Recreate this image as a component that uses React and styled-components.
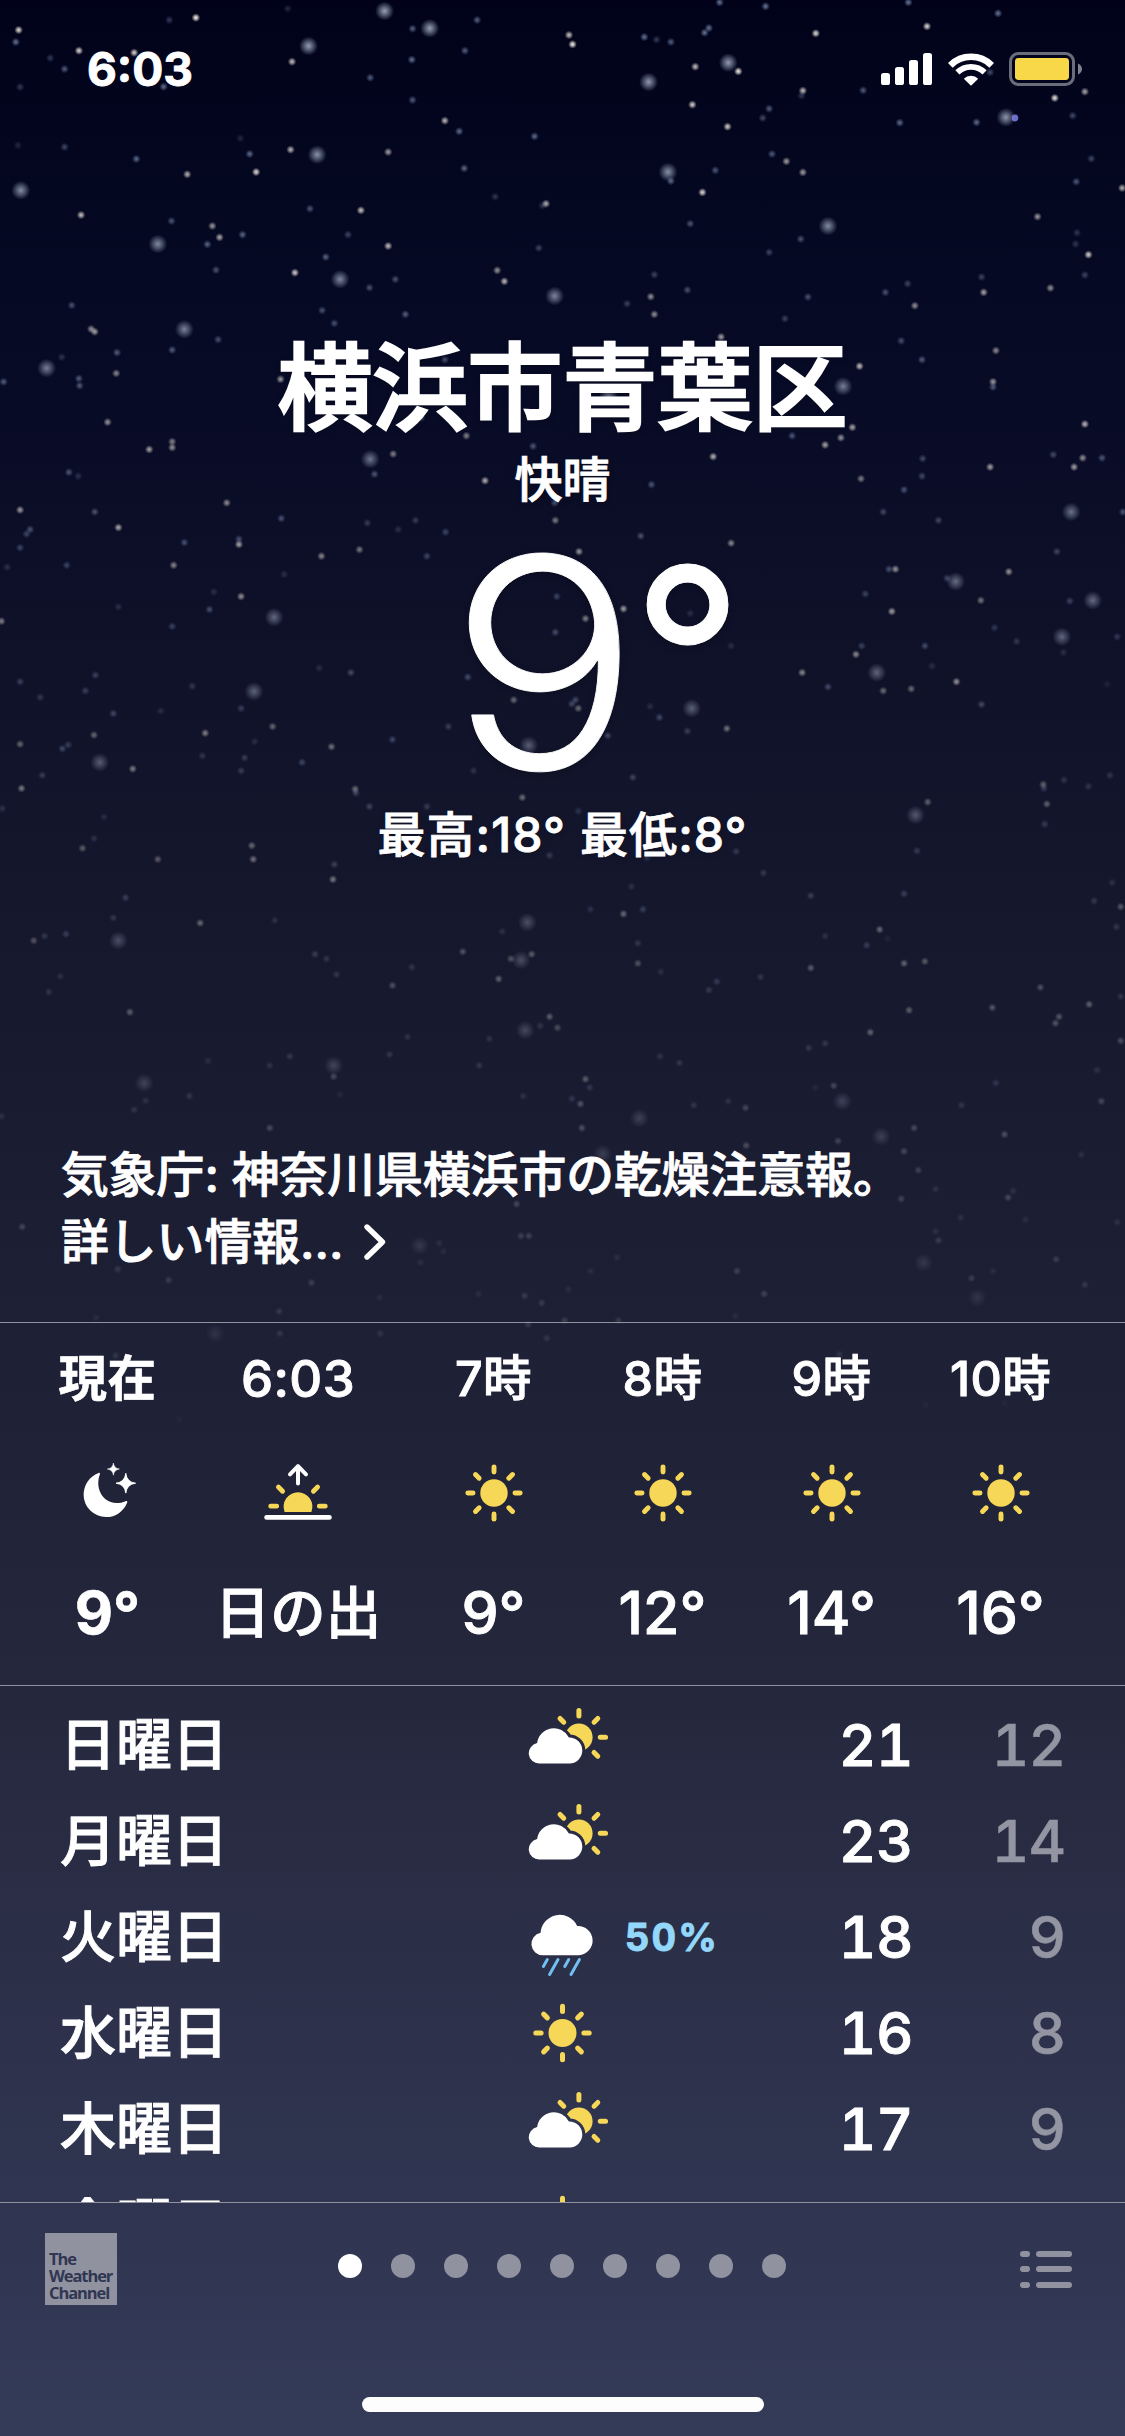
import styled, { createGlobalStyle, css } from "styled-components";

const GlobalStyle = createGlobalStyle`
  * {
    box-sizing: border-box;
  }
  body {
    margin: 0;
    background: #05071b;
  }
`;

// star positions are kept per band: x is out of 1568, y is scaled by the band
const topStars = {
  stepY: 1 / 3,
  startY: 0,
  big: [
    [536, 33], [599, 85], [430, 138], [1015, 188], [904, 246], [442, 464], [29, 571],
    [931, 516], [1402, 352], [1154, 678], [220, 732], [474, 838], [773, 888], [257, 988],
  ],
  small: [
    [273, 53, 1], [26, 90, 0.9], [22, 126, 0.6], [110, 152, 0.9], [187, 158, 0.9], [70, 174, 0.3],
    [90, 207, 0.5], [28, 261, 0.3], [236, 60, 0.3], [401, 26, 0.2], [575, 86, 0.5], [665, 60, 0.5],
    [648, 152, 0.5], [574, 179, 0.6], [407, 185, 0.8], [516, 233, 0.5], [228, 260, 0.6], [575, 300, 0.5],
    [620, 362, 0.8], [640, 394, 0.6], [745, 409, 0.6], [793, 105, 0.8], [798, 133, 1], [898, 111, 0.6],
    [935, 126, 0.5], [915, 119, 0.3], [982, 98, 0.6], [988, 84, 0.6], [1003, 7, 0.6], [1067, 19, 0.6],
    [1137, 100, 0.9], [1266, 7, 0.6], [1292, 79, 0.9], [1391, 40, 0.6], [969, 200, 0.8], [1029, 214, 1],
    [1119, 272, 0.8], [1117, 287, 0.3], [1203, 271, 0.5], [965, 314, 0.9], [1072, 326, 0.5], [1063, 354, 0.4],
    [1014, 380, 0.9], [1380, 217, 0.4], [1512, 275, 0.7], [1470, 294, 1], [1495, 347, 0.4], [1254, 368, 0.6],
    [1361, 367, 0.6], [335, 415, 0.2], [25, 436, 0.2], [90, 441, 0.4], [190, 477, 0.6], [348, 462, 0.6],
    [405, 449, 0.8], [541, 456, 0.7], [647, 505, 0.6], [261, 523, 0.8], [357, 516, 1], [1076, 462, 0.5],
    [1096, 484, 0.7], [997, 511, 0.5], [935, 543, 0.6], [1119, 517, 0.7], [979, 577, 1], [1521, 476, 0.4],
    [1500, 545, 0.5], [1564, 564, 0.8], [690, 590, 0.3], [761, 611, 0.8], [756, 617, 0.3], [113, 645, 0.9],
    [432, 626, 0.5], [503, 631, 0.9], [239, 663, 0.5], [296, 678, 0.7], [338, 704, 0.6], [306, 712, 0.8],
    [289, 733, 0.6], [485, 704, 0.4], [541, 738, 0.9], [454, 771, 0.6], [751, 744, 0.4], [301, 810, 0.5],
    [411, 818, 1], [962, 671, 0.5], [1116, 717, 0.5], [1072, 757, 0.4], [1446, 650, 0.7], [1501, 698, 0.3],
    [1499, 732, 0.3], [1517, 764, 1], [1512, 825, 0.4], [551, 838, 0.5], [515, 863, 0.5], [693, 811, 0.7],
    [703, 844, 0.9], [912, 824, 0.4], [958, 870, 0.5], [907, 890, 0.7], [874, 911, 0.4], [912, 943, 0.7],
    [1126, 891, 0.5], [1234, 877, 0.5], [1265, 851, 0.4], [1275, 917, 0.7], [1368, 831, 0.4], [1371, 877, 0.8],
    [1464, 864, 0.7], [1094, 956, 0.4], [100, 916, 0.5], [449, 931, 0.5], [565, 943, 0.6], [466, 970, 0.5],
    [127, 987, 0.7],
  ],
};

const lowStars = {
  stepY: 0.6505,
  startY: 320,
  big: [
    [65, 74], [1175, 102], [516, 214], [1493, 295], [1332, 402], [1523, 431], [1480, 487], [1222, 542],
    [382, 457], [354, 571], [139, 680], [964, 597], [737, 654], [1276, 761], [735, 926], [165, 954],
    [726, 984], [732, 1092], [465, 1146], [201, 1173], [891, 1227], [1174, 1201], [1228, 1255], [840, 1282],
    [585, 1423], [1287, 1449], [1362, 1503], [300, 1558], [848, 118],
  ],
  small: [
    [132, 18, 0.8], [86, 57, 0.3], [5, 95, 0.6], [110, 90, 0.6], [111, 101, 0.6], [163, 50, 0.6], [162, 82, 0.7],
    [240, 46, 0.6], [304, 30, 0.5], [150, 157, 0.8], [208, 199, 0.9], [240, 187, 0.7], [240, 196, 0.8],
    [96, 234, 0.6], [109, 240, 0.3], [391, 91, 0.8], [620, 61, 0.5], [587, 150, 0.6], [650, 178, 0.7],
    [743, 194, 0.6], [548, 206, 0.7], [522, 237, 0.6], [676, 247, 1], [994, 210, 1], [908, 253, 0.6],
    [773, 281, 0.6], [774, 308, 0.7], [1005, 26, 0.8], [1256, 32, 0.5], [1285, 61, 0.6], [1388, 47, 0.7],
    [1384, 95, 0.8], [1384, 103, 0.6], [1198, 71, 1], [1188, 165, 0.9], [1172, 181, 0.8], [1150, 192, 0.9],
    [1104, 178, 0.6], [1512, 160, 1], [1468, 207, 0.5], [1509, 212, 0.8], [1536, 212, 0.6], [1497, 226, 0.9],
    [1380, 226, 0.9], [1286, 213, 0.5], [1285, 240, 0.5], [1200, 244, 0.7], [1260, 261, 0.6], [1231, 295, 0.5],
    [1308, 308, 0.5], [1565, 295, 0.6], [28, 292, 0.9], [132, 295, 0.6], [165, 319, 1], [42, 322, 0.6],
    [37, 329, 0.5], [28, 350, 0.5], [93, 377, 0.5], [10, 380, 0.3], [316, 281, 0.8], [392, 305, 0.6],
    [257, 342, 0.6], [333, 345, 1], [333, 337, 0.6], [242, 377, 0.8], [448, 363, 0.8], [501, 353, 0.7],
    [512, 312, 0.4], [579, 308, 0.4], [555, 322, 0.3], [621, 326, 0.5], [595, 363, 0.5], [396, 391, 0.3],
    [336, 425, 0.9], [292, 445, 0.6], [298, 418, 0.3], [165, 441, 0.3], [240, 471, 0.5], [2, 463, 0.8],
    [893, 332, 0.6], [1019, 343, 0.8], [807, 356, 0.9], [776, 425, 0.5], [869, 444, 1], [816, 459, 0.8],
    [774, 480, 0.6], [962, 451, 0.3], [1019, 501, 0.3], [1239, 383, 0.6], [1248, 383, 0.9], [1320, 397, 0.5],
    [1406, 387, 0.9], [1367, 431, 0.7], [1473, 356, 0.5], [1491, 432, 0.5], [1206, 421, 0.5], [1243, 448, 1],
    [1386, 473, 0.4], [1417, 494, 0.4], [1289, 501, 0.6], [1482, 511, 0.3], [1557, 487, 0.4], [1201, 501, 0.5],
    [1193, 514, 0.9], [1118, 542, 0.9], [1154, 564, 0.6], [1231, 570, 0.7], [1270, 567, 0.7], [1333, 556, 1],
    [1299, 532, 0.3], [1368, 591, 0.6], [1543, 560, 0.2], [445, 535, 0.3], [489, 542, 0.6], [28, 556, 0.5],
    [56, 580, 0.4], [133, 546, 0.5], [119, 570, 0.5], [158, 605, 0.6], [224, 601, 0.3], [268, 563, 0.4],
    [336, 597, 0.5], [380, 625, 0.7], [286, 635, 0.9], [131, 638, 0.7], [95, 653, 0.5], [87, 659, 0.6],
    [28, 652, 0.7], [59, 700, 0.5], [185, 690, 0.9], [282, 670, 0.4], [341, 673, 0.5], [336, 693, 0.5],
    [355, 648, 0.3], [421, 680, 0.6], [462, 656, 0.8], [547, 645, 0.6], [652, 549, 0.6], [716, 584, 0.7],
    [802, 584, 0.6], [797, 590, 0.6], [806, 597, 0.7], [625, 625, 0.5], [906, 594, 0.3], [919, 611, 0.6],
    [958, 632, 0.5], [1013, 628, 0.8], [847, 639, 0.6], [660, 693, 0.4], [882, 703, 0.6], [728, 734, 0.8],
    [495, 721, 0.8], [496, 727, 0.6], [515, 748, 0.6], [595, 748, 0.5], [806, 755, 0.4], [30, 720, 0.9],
    [3, 751, 0.4], [145, 764, 0.3], [131, 797, 0.4], [115, 812, 0.7], [220, 829, 0.7], [351, 808, 0.8],
    [353, 829, 0.9], [466, 837, 0.6], [464, 860, 1], [766, 823, 0.5], [902, 827, 0.4], [1026, 817, 0.5],
    [1293, 741, 0.7], [1278, 816, 0.5], [1454, 714, 0.7], [1455, 720, 0.5], [1459, 744, 0.7], [1456, 775, 0.5],
    [1483, 707, 0.4], [1517, 717, 0.4], [1547, 700, 0.4], [1064, 850, 0.5], [880, 871, 0.4], [1130, 885, 0.6],
    [1260, 882, 0.6], [1550, 865, 0.4], [1525, 893, 0.5], [1562, 902, 0.7], [1556, 933, 0.5], [175, 888, 0.6],
    [158, 919, 0.5], [279, 927, 0.9], [383, 923, 0.4], [47, 954, 0.7], [62, 947, 0.5], [92, 944, 0.6],
    [823, 906, 0.4], [869, 913, 0.9], [896, 906, 0.6], [889, 958, 0.5], [889, 989, 0.7], [1226, 937, 0.9],
    [1237, 951, 0.2], [1150, 947, 0.4], [1208, 961, 0.6], [1260, 989, 0.9], [1289, 986, 0.8], [1130, 996, 0.8],
    [1060, 1010, 0.5], [999, 1017, 0.6], [988, 1030, 0.6], [921, 1002, 0.4], [700, 940, 0.4], [741, 975, 0.8],
    [712, 982, 0.7], [695, 1013, 0.9], [645, 971, 0.7], [574, 995, 0.5], [547, 1023, 0.7], [439, 975, 0.6],
    [455, 982, 0.5], [469, 1006, 0.5], [84, 1009, 0.4], [68, 1033, 0.5], [181, 1064, 0.9], [766, 1071, 0.9],
    [753, 1085, 0.5], [777, 1088, 0.7], [682, 1105, 0.5], [568, 1102, 0.5], [543, 1129, 0.6], [668, 1146, 0.6],
    [404, 1132, 0.6], [376, 1146, 0.5], [290, 1139, 0.4], [264, 1193, 0.6], [203, 1200, 0.5], [187, 1214, 0.6],
    [465, 1163, 0.7], [474, 1191, 0.3], [816, 1167, 1], [822, 1180, 0.6], [797, 1197, 0.6], [809, 1205, 0.9],
    [729, 1193, 0.5], [811, 1242, 0.9], [920, 1132, 0.5], [947, 1142, 0.6], [1127, 1119, 0.6], [1150, 1112, 0.6],
    [1213, 1095, 1], [1267, 1061, 0.9], [1383, 1057, 0.8], [1450, 1026, 0.7], [1518, 1052, 0.9], [1476, 1071, 0.8],
    [1471, 1081, 0.8], [1562, 1040, 0.5], [1562, 1108, 0.7], [1529, 1153, 0.5], [1388, 1173, 0.6], [1535, 1201, 0.7],
    [1340, 1207, 0.6], [1162, 1177, 0.7], [1136, 1180, 0.3], [1015, 1201, 0.5], [1039, 1211, 0.7], [967, 1207, 0.6],
    [376, 1242, 0.8], [2, 1224, 0.5], [1274, 1242, 0.8], [1400, 1252, 0.9], [1507, 1283, 0.5], [1168, 1262, 0.7],
    [1040, 1269, 0.9], [1260, 1278, 0.8], [1280, 1307, 0.7], [1304, 1336, 0.6], [1256, 1351, 0.8], [1412, 1339, 0.6],
    [1405, 1349, 0.9], [1339, 1380, 0.6], [1429, 1383, 0.5], [1557, 1387, 0.6], [720, 1359, 0.9], [726, 1408, 0.8],
    [737, 1408, 0.8], [860, 1441, 0.6], [612, 1419, 0.6], [618, 1432, 0.5], [586, 1449, 0.6], [1304, 1401, 0.6],
    [1308, 1415, 0.7], [1472, 1444, 0.8], [1027, 1462, 0.9], [1384, 1462, 0.6], [1354, 1473, 0.8], [1512, 1483, 0.7],
    [1065, 1497, 1], [823, 1462, 0.6], [235, 1476, 0.8], [164, 1459, 0.7], [434, 1480, 0.9], [31, 1394, 0.9],
    [667, 1497, 0.6], [731, 1500, 0.8], [792, 1490, 0.6], [755, 1511, 0.8], [529, 1503, 0.6], [389, 1524, 0.8],
    [134, 1534, 0.6], [787, 1538, 1], [862, 1538, 0.8], [1025, 1531, 0.6], [736, 1544, 0.9], [390, 1558, 0.8],
    [530, 1558, 0.7], [762, 1565, 0.8], [161, 1592, 0.8], [380, 1622, 0.6], [1170, 1590, 0.7], [1200, 1640, 0.6],
    [690, 1610, 0.5], [1400, 1665, 0.5], [1290, 1668, 0.5], [250, 1690, 0.5],
  ],
};

const place = ({ startY, stepY }, [x, y]) => ({ cx: x * 0.7175, cy: startY + y * stepY });
const fade = (y) => Math.max(0, 1 - y / 1560);

function StarField() {
  return (
    <Sky viewBox="0 0 1125 2436">
      <defs>
        <radialGradient id="glow">
          <stop offset="0" stopColor="#aab4c8" stopOpacity="0.9" />
          <stop offset="0.45" stopColor="#9aa5bd" stopOpacity="0.55" />
          <stop offset="1" stopColor="#8d99b5" stopOpacity="0" />
        </radialGradient>
        <radialGradient id="warm">
          <stop offset="0" stopColor="#fffaf0" />
          <stop offset="0.4" stopColor="#e6e0d8" stopOpacity="0.75" />
          <stop offset="1" stopColor="#c8c4c0" stopOpacity="0" />
        </radialGradient>
        <radialGradient id="cool">
          <stop offset="0" stopColor="#b4c6e6" />
          <stop offset="0.4" stopColor="#8ea4cc" stopOpacity="0.75" />
          <stop offset="1" stopColor="#7f94c0" stopOpacity="0" />
        </radialGradient>
      </defs>
      {[topStars, lowStars].map((band, b) => (
        <g key={b}>
          {band.big.map((star, i) => {
            const { cx, cy } = place(band, star);
            return <circle key={i} cx={cx} cy={cy} r="9.5" fill="url(#glow)" opacity={fade(cy)} />;
          })}
          {band.small.map((star, i) => {
            const { cx, cy } = place(band, star);
            const tint = star[2] > 0.65 ? "url(#warm)" : "url(#cool)";
            return <circle key={`s${i}`} cx={cx} cy={cy} r="4.4" fill={tint} opacity={fade(cy) * star[2]} />;
          })}
        </g>
      ))}
      <circle cx="1015" cy="118" r="3.4" fill="#7f80e6" opacity="0.85" />
    </Sky>
  );
}

function Signal() {
  return (
    <svg width="52" height="34" viewBox="0 0 52 34" fill="#fff">
      <rect x="0" y="21" width="9" height="12" rx="2.6" />
      <rect x="14" y="15" width="9" height="18" rx="2.6" />
      <rect x="28" y="8" width="9" height="25" rx="2.6" />
      <rect x="42" y="1" width="9" height="32" rx="2.6" />
    </svg>
  );
}

function Wifi() {
  return (
    <svg width="46" height="34" viewBox="0 0 46 34" fill="none" stroke="#fff">
      <path d="M2.3 13.3A29.5 29.5 0 0 1 43.7 13.3" strokeWidth="6.6" />
      <path d="M9.4 20.4A19.3 19.3 0 0 1 36.6 20.4" strokeWidth="5.8" />
      <path d="M23 33.8L15.8 26.7A10.2 10.2 0 0 1 30.2 26.7Z" fill="#fff" stroke="none" />
    </svg>
  );
}

function Battery() {
  return (
    <svg width="74" height="34" viewBox="0 0 74 34">
      <rect x="1.5" y="1.5" width="63" height="31" rx="8" fill="none" stroke="#fff" strokeOpacity="0.42" strokeWidth="3" />
      <rect x="6" y="6" width="54" height="22" rx="3.4" fill="#f8d749" />
      <path d="M69 11.5V22.5C71.4 21.3 73 19.4 73 17S71.4 12.7 69 11.5Z" fill="#fff" fillOpacity="0.5" />
    </svg>
  );
}

const yellow = "#f6d757";
const allRays = [0, 45, 90, 135, 180, 225, 270, 315];

function SunShape({ x, y, rays = allRays, r = 14 }) {
  return (
    <g transform={`translate(${x} ${y})`}>
      <circle r={r} fill={yellow} />
      {rays.map((a) => (
        <path key={a} d="M0 -21.4V-26.7" transform={`rotate(${a})`} stroke={yellow} strokeWidth="5" strokeLinecap="round" />
      ))}
    </g>
  );
}

function Sun() {
  return (
    <svg width="58" height="60" viewBox="-29.6 -30.6 59.2 61.2">
      <SunShape x={0} y={0} />
    </svg>
  );
}

function Moon() {
  return (
    <svg width="60" height="60" viewBox="0 0 60 60" fill="#fff">
      <path d="M20.6 9.9C21.6 9.7 22.2 10.4 21.9 11.3C18.2 21 21 30.5 27.2 36C33 40.8 40.5 41.2 47.6 38.2C48.8 37.8 49.6 38.4 49.2 39.6A22.4 22.4 0 0 1 28 54A22.3 22.3 0 0 1 5.6 32C5.6 22 11.5 13.2 20.6 9.9Z" />
      <path d="M35.4 0Q36 5.4 41.4 6Q36 6.8 35.4 12.2Q34.8 6.8 29.4 6Q34.8 5.4 35.4 0Z" stroke="#fff" strokeWidth="0.5" />
      <path d="M47.8 10.3Q48.8 19.2 57.6 20.2Q48.8 21.2 47.8 30.1Q46.8 21.2 38 20.2Q46.8 19.2 47.8 10.3Z" stroke="#fff" strokeWidth="0.9" />
    </svg>
  );
}

function Sunrise() {
  return (
    <svg width="68" height="60" viewBox="0 0 68 60" fill="none" strokeLinecap="round" strokeLinejoin="round">
      <path d="M34 20.4V3.6M26 11.4L34 3.2L42 11.4" stroke="#fff" strokeWidth="4" />
      <path d="M20.6 49A14.4 14.4 0 1 1 47.4 49Z" fill={yellow} />
      <path d="M6.7 43.2H12.7M55.3 43.2H61.3M14.4 24L18.6 28.2M53.6 24L49.4 28.2" stroke={yellow} strokeWidth="4.8" />
      <path d="M2.6 54.4H65.4" stroke="#fff" strokeWidth="4.7" />
    </svg>
  );
}

function DaySun() {
  return (
    <svg width="80" height="84" viewBox="0 0 80 84">
      <SunShape x={34.5} y={42} />
    </svg>
  );
}

const partlyCloud =
  "M11 56A10.3 10.3 0 0 1 8.6 35.6A16.9 16.9 0 0 1 40.4 30A13 13 0 0 1 41.2 56Z";

function PartlyCloudy() {
  return (
    <svg width="80" height="84" viewBox="0 0 80 84">
      <mask id="cloudGap">
        <rect x="-5" y="-5" width="90" height="90" fill="#fff" />
        <path d={partlyCloud} fill="#000" stroke="#000" strokeWidth="6" />
      </mask>
      <g transform="translate(0.5 4.5)">
        <g mask="url(#cloudGap)">
          <SunShape x={50.4} y={29.8} rays={[0, 45, 90, 135, 315]} r={13.7} />
        </g>
        <path d={partlyCloud} fill="#fff" />
      </g>
    </svg>
  );
}

function Rain() {
  return (
    <svg width="80" height="84" viewBox="0 0 80 84">
      <g transform="translate(2 19)">
        <path d="M13 41.2A11.3 11.3 0 0 1 10.6 18.8A19.2 19.2 0 0 1 47.2 12A14.6 14.6 0 0 1 48.8 41.2Z" fill="#fff" />
        <path
          d="M17.3 45.6L13.4 52.4M28 45.6L19.6 60.4M38.7 45.6L34.8 52.4M49.4 45.6L41 60.4"
          stroke="#72bff5"
          strokeWidth="3"
          strokeLinecap="round"
        />
      </g>
    </svg>
  );
}

function Chevron() {
  return (
    <svg width="24" height="38" viewBox="0 0 24 38" fill="none">
      <path d="M4 4L19.5 19L4 34" stroke="#fff" strokeWidth="5.4" strokeLinecap="round" strokeLinejoin="round" />
    </svg>
  );
}

const hours = [
  { label: "現在", icon: <Moon />, value: "9°", now: true },
  { label: "6:03", icon: <Sunrise />, value: "日の出", wide: true },
  { label: "7時", icon: <Sun />, value: "9°" },
  { label: "8時", icon: <Sun />, value: "12°" },
  { label: "9時", icon: <Sun />, value: "14°" },
  { label: "10時", icon: <Sun />, value: "16°" },
  { label: "11時", icon: <Sun /> },
];

const days = [
  { name: "日曜日", icon: <PartlyCloudy />, high: 21, low: 12 },
  { name: "月曜日", icon: <PartlyCloudy />, high: 23, low: 14 },
  { name: "火曜日", icon: <Rain />, chance: "50%", high: 18, low: 9 },
  { name: "水曜日", icon: <DaySun />, high: 16, low: 8 },
  { name: "木曜日", icon: <PartlyCloudy />, high: 17, low: 9 },
  { name: "金曜日", icon: <DaySun /> },
];

function App() {
  return (
    <Screen lang="ja">
      <GlobalStyle />
      <StarField />
      <StatusBar>
        <Clock>6:03</Clock>
        <StatusIcons>
          <Signal />
          <Wifi />
          <Battery />
        </StatusIcons>
      </StatusBar>

      <Hero>
        <City>横浜市青葉区</City>
        <Condition>快晴</Condition>
        <Temperature>
          <Figure>9</Figure>
          <Degree>°</Degree>
        </Temperature>
        <Range>最高:18° 最低:8°</Range>
      </Hero>

      <Alert>
        <span>気象庁: 神奈川県横浜市の乾燥注意報。</span>
        <More>
          詳しい情報... <Chevron />
        </More>
      </Alert>

      <Hourly>
        {hours.map((h) => (
          <Hour key={h.label} $wide={h.wide} $now={h.now}>
            <HourLabel $wide={h.wide}>{h.label}</HourLabel>
            <HourIcon>{h.icon}</HourIcon>
            <HourValue $wide={h.wide}>{h.value}</HourValue>
          </Hour>
        ))}
      </Hourly>

      <Daily>
        {days.map((d) => (
          <Day key={d.name}>
            <DayName>{d.name}</DayName>
            {d.icon}
            <Chance>{d.chance}</Chance>
            <High>{d.high}</High>
            <Low>{d.low}</Low>
          </Day>
        ))}
      </Daily>

      <Footer>
        <Toolbar>
          <Logo>
            <span>The</span>
            <span>Weather</span>
            <span>Channel</span>
          </Logo>
          <Pages>
            {Array.from({ length: 9 }, (_, i) => (
              <Dot key={i} $active={i === 0} />
            ))}
          </Pages>
          <ListButton>
            {[0, 1, 2].map((i) => (
              <ListLine key={i} />
            ))}
          </ListButton>
        </Toolbar>
        <HomeBar />
      </Footer>
    </Screen>
  );
}
export default App;

const Screen = styled.main`
  position: relative;
  display: flex;
  flex-direction: column;
  width: 1125px;
  height: 2436px;
  overflow: hidden;
  color: #fff;
  font-family: Inter, "Noto Sans CJK JP", sans-serif;
  font-weight: 500;
  -webkit-text-stroke: 0.9px currentColor;
  background: linear-gradient(
    #01021a 0,
    #040720 180px,
    #080b26 400px,
    #0f1129 640px,
    #15172d 900px,
    #1b1d33 1180px,
    #1f2136 1400px,
    #25283d 1700px,
    #2d314b 2030px,
    #303652 2240px,
    #343b58 2436px
  );
`;

const Sky = styled.svg`
  position: absolute;
  inset: 0;
  width: 100%;
  height: 100%;

  & ~ * {
    position: relative;
  }
`;

const StatusBar = styled.header`
  display: flex;
  flex: none;
  align-items: center;
  justify-content: space-between;
  height: 138px;
  padding: 0 42px 0 87px;
`;

const Clock = styled.span`
  font-size: 46px;
  font-weight: 700;
  line-height: 60px;
`;

const StatusIcons = styled.div`
  display: flex;
  align-items: center;
  gap: 15px;
`;

const Hero = styled.section`
  display: flex;
  flex: none;
  flex-direction: column;
  align-items: center;
  height: 1004px;
  padding-top: 186px;
  text-shadow: 0 2px 6px rgba(0, 0, 0, 0.25);
`;

const City = styled.h1`
  margin: 0;
  font-size: 95px;
  font-weight: 500;
  line-height: 129px;
  -webkit-text-stroke-width: 2.6px;
`;

const Condition = styled.p`
  margin: 0 0 5px;
  font-size: 48px;
  line-height: 54px;
`;

const Temperature = styled.p`
  display: flex;
  align-items: flex-start;
  height: 301px;
  margin: 0;
  padding-left: 68px;
  font-size: 293px;
  font-weight: 300;
  line-height: 302px;
`;

const Figure = styled.span`
  transform: scaleX(1.08);
  transform-origin: left;
`;

const Degree = styled.span`
  margin-left: 6px;
  font-size: 246px;
  font-weight: 400;
  line-height: 286px;
`;

const Range = styled.p`
  margin: 0;
  font-size: 48px;
  line-height: 44px;
  letter-spacing: 1.1px;
`;

const Alert = styled.section`
  display: flex;
  flex: none;
  flex-direction: column;
  height: 180px;
  padding-left: 61px;
  font-size: 47.8px;
  line-height: 66.5px;
`;

const More = styled.span`
  display: flex;
  align-items: center;
  gap: 20px;
`;

const divider = css`
  border-top: 1px solid #91929e;
`;

const Hourly = styled.section`
  ${divider}
  display: flex;
  flex: none;
  height: 363px;
  padding: 28px 0 0 23px;
  overflow: hidden;
`;

const Hour = styled.div`
  display: flex;
  flex: none;
  flex-direction: column;
  align-items: center;
  width: ${(p) => (p.$wide ? "217px" : "169px")};
  padding-right: ${(p) => (p.$wide ? "5px" : "0")};
  font-weight: ${(p) => (p.$now ? 700 : 500)};
  ${(p) => p.$now && "-webkit-text-stroke-width: 0.6px;"}
`;

const HourLabel = styled.span`
  font-size: ${(p) => (p.$wide ? "51px" : "48.5px")};
  line-height: 56px;
  letter-spacing: 0.4px;
`;

const HourIcon = styled.div`
  display: flex;
  height: 60px;
  margin: 56px 0 55px;
`;

const HourValue = styled.span`
  font-size: ${(p) => (p.$wide ? "55.5px" : "59px")};
  line-height: 70px;
`;

const Daily = styled.section`
  ${divider}
  flex: none;
  height: 517px;
  padding-top: 11px;
  overflow: hidden;
`;

const Day = styled.div`
  display: flex;
  align-items: center;
  height: 96px;
  padding: 0 60px;
  font-size: 58px;
  line-height: 96px;
  font-variant-numeric: tabular-nums;
`;

const DayName = styled.span`
  width: 468px;
  font-size: 56px;
`;

const Chance = styled.span`
  flex: 1;
  padding-left: 17px;
  color: #93d8fb;
  font-size: 38px;
  font-weight: 700;
  letter-spacing: 2px;
`;

const High = styled.span`
  text-align: right;
  letter-spacing: -0.5px;
`;

const Low = styled.span`
  width: 152px;
  color: #9395a2;
  text-align: right;
  letter-spacing: -1px;
  -webkit-text-stroke-width: 0.5px;
`;

const Footer = styled.footer`
  ${divider}
  display: flex;
  flex: 1;
  flex-direction: column;
  align-items: center;
  justify-content: space-between;
  padding: 30px 0 24px;
`;

const Toolbar = styled.div`
  display: flex;
  align-items: center;
  justify-content: space-between;
  width: 100%;
  height: 72px;
  padding: 0 53px 0 45px;
`;

const Logo = styled.div`
  display: flex;
  flex-direction: column;
  justify-content: flex-end;
  width: 72px;
  height: 72px;
  padding: 0 0 4px 4px;
  background: #9092a0;
  color: #303652;
  font-family: "Open Sans", "Noto Sans", sans-serif;
  font-size: 16.5px;
  font-weight: 700;
  line-height: 17px;
  letter-spacing: -1.1px;
  -webkit-text-stroke-width: 0;
`;

const Pages = styled.div`
  display: flex;
  gap: 29px;
  margin: 0 0 7px -13px;
`;

const Dot = styled.i`
  width: 24px;
  height: 24px;
  border-radius: 50%;
  background: ${(p) => (p.$active ? "#fff" : "#9092a0")};
`;

const ListButton = styled.div`
  display: flex;
  flex-direction: column;
  gap: 9.5px;
`;

const ListLine = styled.div`
  display: flex;
  gap: 6px;
  height: 6px;

  &::before,
  &::after {
    content: "";
    width: 10px;
    border-radius: 3px;
    background: #9092a0;
  }
  &::after {
    width: 36px;
  }
`;

const HomeBar = styled.div`
  width: 402px;
  height: 15px;
  border-radius: 8px;
  background: #fdfdfd;
`;
